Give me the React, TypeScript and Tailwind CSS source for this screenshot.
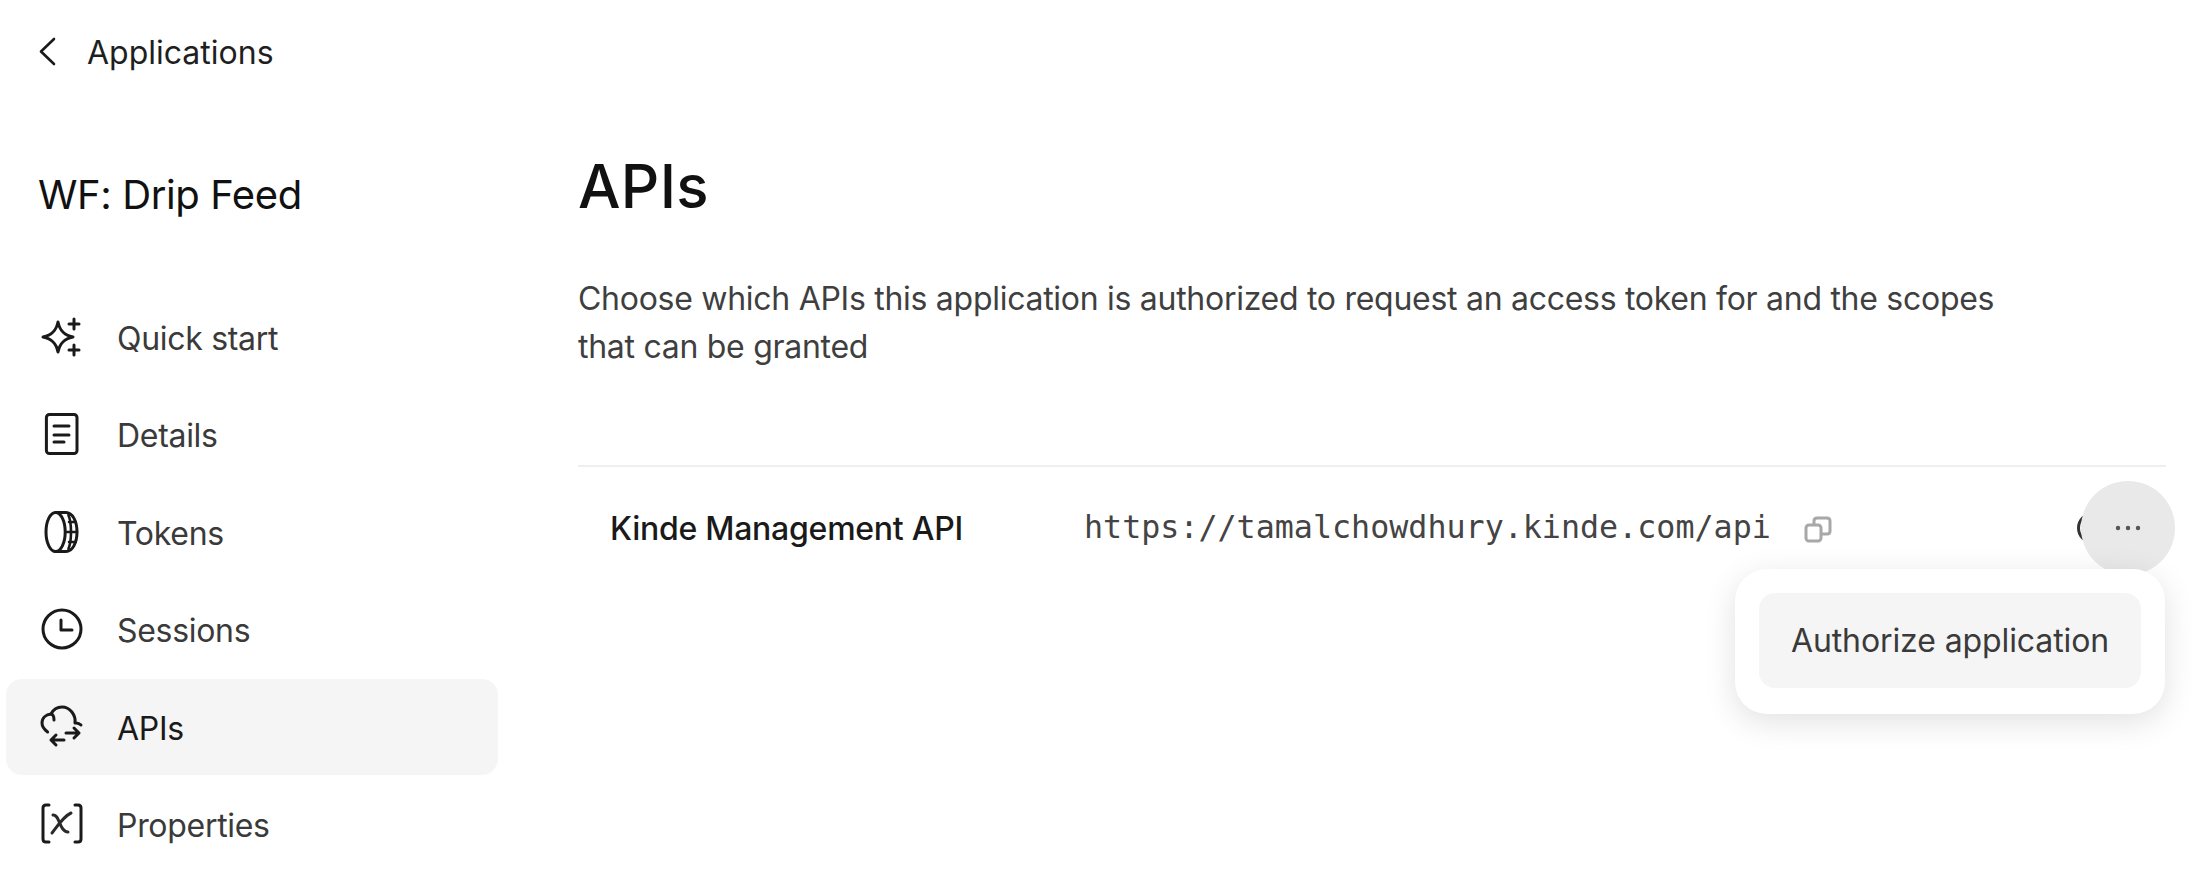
const Icon = ({ children, sw = 1.5 }: { children: React.ReactNode; sw?: number }) => (
  <svg width="48" height="48" viewBox="0 0 24 24" fill="none" stroke="#1a1a1a" strokeWidth={sw} strokeLinecap="round" strokeLinejoin="round" className="shrink-0">
    {children}
  </svg>
);

const icons: Record<string, React.ReactNode> = {
  quick: (
    <>
      <path d="M10 4.500c.9 4.400 3 6.600 7.500 7.500-4.500.9-6.600 3.100-7.500 7.500-.9-4.400-3-6.600-7.500-7.500 4.500-.9 6.600-3.100 7.500-7.500Z" />
      <path d="M18 3v5M15.500 5.500h5M18 16v5M15.500 18.500h5" />
    </>
  ),
  doc: (
    <>
      <rect x="4.200" y="2.200" width="15.300" height="19.600" rx="1.500" />
      <path d="M8 8h7.500M8 12.500h7.500M8 16h5" />
    </>
  ),
  coin: (
    <>
      <ellipse cx="8.800" cy="12" rx="4.800" ry="9.800" />
      <path d="M8.800 2.200h5.200c3.200 0 5.500 4.400 5.500 9.800s-2.300 9.800-5.500 9.800H8.800" />
      <path d="M15.200 3.500c1 2.300 1.300 5.500 1.300 8.500s-.3 6.200-1.300 8.500M13.800 12h5.700M15.500 7h3.200M15.500 17h3.200" strokeWidth="1.300" />
    </>
  ),
  clock: (
    <>
      <circle cx="12" cy="12" r="9.500" />
      <path d="M11.500 7.500v5H17" />
    </>
  ),
  cloud: (
    <>
      <path d="M21.500 11c-.8-.8-1.900-1.200-3-1 .5-4-2.500-8-6.500-8-2.500 0-4.500 1.500-5.500 3.500-2.500.3-4.500 2-4.500 4.500 0 2 1.500 3.500 2.800 4.500" />
      <path d="M6.500 5.500c1 .2 1.500 1.200 1.500 3" />
      <path d="M14 15h6.500M18 12.500l2.500 2.500-2.500 2.500M13 18.500H6.500M9 16l-2.500 2.500L9 21" />
    </>
  ),
  vars: (
    <>
      <path d="M5.500 2.500H4c-.9 0-1.500.6-1.500 1.500v15.500c0 .9.600 1.500 1.500 1.500h1.500M18.500 2.500H20c.9 0 1.500.6 1.500 1.500v15.500c0 .9-.6 1.500-1.500 1.500h-1.500" />
      <path d="M16.500 6.500c-3.500 1.500-6.500 6-9.500 10M7.500 7.500c3.500-.5 3 8.500 7.500 8.500" strokeWidth="1.500" stroke="#2a2a2a" />
    </>
  ),
};

const nav = [
  { label: "Quick start", icon: "quick" },
  { label: "Details", icon: "doc" },
  { label: "Tokens", icon: "coin" },
  { label: "Sessions", icon: "clock" },
  { label: "APIs", icon: "cloud", active: true },
  { label: "Properties", icon: "vars" },
];

export default function App() {
  return (
    <div className="w-[2200px] h-[894px] bg-white overflow-hidden flex font-['Inter',sans-serif] text-[#1a1a1a]">
      <aside className="w-[504px] shrink-0 flex flex-col pl-[6px] pr-[6px]">
        <div className="h-[104px] flex items-center pl-[32px] gap-[25px]">
          <svg width="24" height="32" viewBox="0 0 24 32" fill="none" stroke="#1a1a1a" strokeWidth="2.600" strokeLinecap="round" strokeLinejoin="round">
            <path d="M16 3 3 15.500 16 28" />
          </svg>
          <span className="text-[32px] leading-[40px] text-[#1f1f1f] relative top-[1px]">Applications</span>
        </div>
        <h2 className="mt-[64px] pl-[32px] text-[40px] tracking-[-0.4px] leading-[54px] font-normal text-[#111]">WF: Drip Feed</h2>
        <nav className="mt-[67px] flex flex-col gap-[2px]">
          {nav.map((n) => (
            <div key={n.label} className={`h-[95.500px] rounded-[16px] flex items-center pl-[32px] gap-[31px] text-[32px] tracking-[-0.3px] ${n.active ? "bg-[#f5f5f5] text-[#1a1a1a]" : "text-[#3a3a3a]"}`}>
              <Icon>{icons[n.icon]}</Icon>
              <span className="relative top-[2px]">{n.label}</span>
            </div>
          ))}
        </nav>
      </aside>
      <main className="flex-1 pl-[74px] pr-[34px] flex flex-col">
        <h1 className="mt-[146px] text-[60px] tracking-[0.3px] leading-[80px] font-[450] text-[#111]">APIs</h1>
        <p className="mt-[49px] w-[1480px] text-[32px] tracking-[-0.28px] leading-[48px] text-[#3f3f3f]">
          Choose which APIs this application is authorized to request an access token for and the scopes that can be granted
        </p>
        <div className="relative mt-[94px] border-t-2 border-[#efefef] h-[126px] flex items-center pl-[32px]">
          <span className="w-[474px] text-[32px] tracking-[-0.26px] font-medium text-[#1a1a1a]">Kinde Management API</span>
          <span className="font-['DejaVu_Sans_Mono',monospace] text-[31.700px] text-[#444] relative top-[-1px]">https://tamalchowdhury.kinde.com/api</span>
          <svg className="ml-[32px]" width="30" height="30" viewBox="0 0 30 30" fill="none" stroke="#a8a8a8" strokeWidth="3" strokeLinejoin="round">
            <rect x="3" y="11" width="15" height="16" rx="3" />
            <path d="M11 11V7c0-2 1-3 3-3h10c2 0 3 1 3 3v10c0 2-1 3-3 3h-6" />
          </svg>
          <div className="absolute left-[1499px] top-[45px] w-[32px] h-[32px] rounded-full border-[3px] border-[#333]" />
          <div className="absolute left-[1503px] top-[14px] w-[94px] h-[94px] rounded-full bg-[#e9e9e9] flex items-center justify-center">
            <svg width="26" height="6" viewBox="0 0 26 6" fill="#555">
              <circle cx="3" cy="3" r="2.200" />
              <circle cx="13" cy="3" r="2.200" />
              <circle cx="23" cy="3" r="2.200" />
            </svg>
          </div>
          <div className="absolute left-[1157px] top-[102px] w-[430px] h-[145px] rounded-[32px] bg-white p-[24px] shadow-[0_8px_32px_rgba(0,0,0,0.12)]">
            <div className="h-[95px] rounded-[16px] bg-[#f5f5f5] flex items-center justify-center text-[32px] tracking-[-0.1px] text-[#3a3a3a]">Authorize application</div>
          </div>
        </div>
      </main>
    </div>
  );
}
